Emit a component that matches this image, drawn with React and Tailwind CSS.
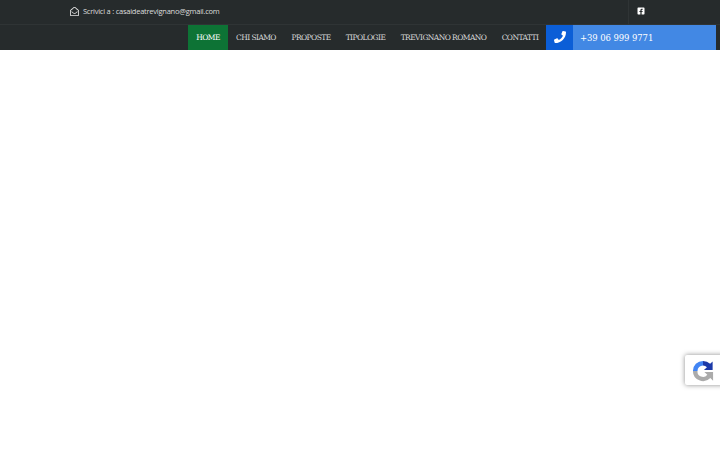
import React from "react";
import { FaPhone, FaFacebookSquare, FaRegEnvelopeOpen } from "react-icons/fa";

const items = [
  ["HOME", "w-[40px]", true],
  ["CHI SIAMO", "w-[56px]"],
  ["PROPOSTE", "w-[54px]"],
  ["TIPOLOGIE", "w-[55px]"],
  ["TREVIGNANO ROMANO", "w-[101px]"],
  ["CONTATTI", "w-[52px]"],
];

export default function App() {
  return (
    <div className="relative h-[450px] w-[720px] overflow-hidden bg-white">
      <header className="h-[49.5px] bg-[#262b2c]">
        <div className="flex h-[25px] border-b border-[#2f3435]">
          <div className="flex flex-1 items-center gap-[4px] pb-[1px] pl-[70px] font-['Open_Sans',sans-serif] text-[#dcdddd]">
            <FaRegEnvelopeOpen className="h-[9px] w-[9px] text-[#e5e5e5]" />
            <span className="text-[7.5px] leading-none tracking-[-0.24px]">Scrivici a : casaideatrevignano@gmail.com</span>
          </div>
          <div className="flex w-[92px] items-center border-l border-[#2f3435] pb-[2px] pl-[8px]">
            <FaFacebookSquare className="h-[8px] w-[8px] text-white" />
          </div>
        </div>
        <div className="flex h-[24.5px] pl-[188px] font-['DejaVu_Serif',serif] text-[7.5px] tracking-[-0.56px] text-[#d8d9d9]">
          <nav className="flex">
            {items.map(([label, w, active]) => (
              <a key={label} className={`flex items-center justify-center whitespace-nowrap pt-[1px] ${w} ${active ? "bg-[#0d7335] text-white" : ""}`}>
                {label}
              </a>
            ))}
          </nav>
          <div className="flex w-[170px]">
            <div className="flex w-[27px] items-center justify-center bg-[#0b5ed7] pb-[1px]">
              <FaPhone className="h-[12px] w-[12px] text-white" />
            </div>
            <div className="flex flex-1 items-center bg-[#4288e4] pl-[7px] pt-[2px] text-[8.5px] tracking-[-0.1px] text-white">+39 06 999 9771</div>
          </div>
        </div>
      </header>
      <div className="absolute left-[685px] top-[355px] flex h-[30px] w-[40px] items-center rounded-[2px] bg-white pl-[7px] pt-[1px] shadow-[0_0_5px_rgba(128,128,128,0.9)]">
        <svg viewBox="0 0 24 24" className="h-[22px] w-[22px]">
          <path d="M12 1a11 11 0 0 1 7.8 3.2L22.5 1.5V11H13l3.3-3.2A6 6 0 0 0 12 6z" fill="#1c3aa9" />
          <path d="M12 1A11 11 0 0 0 1 12h5a6 6 0 0 1 6-6z" fill="#4285f4" />
          <path d="M1 12a11 11 0 0 0 19 7.5L23 22.5V13h-9.5l3.2 3.2A6 6 0 0 1 6 12z" fill="#ababab" />
        </svg>
      </div>
    </div>
  );
}
